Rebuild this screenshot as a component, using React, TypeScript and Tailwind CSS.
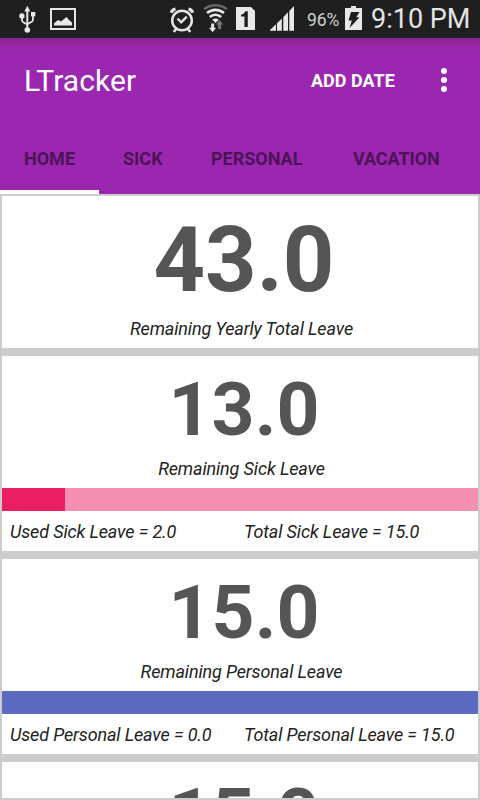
import type { ReactNode } from "react";

const text = "font-[Roboto,'Noto_Sans',sans-serif]";

function StatusBar() {
  return (
    <div className="flex h-[38px] w-full shrink-0 items-start bg-[#1f1f1f] text-[#e4e4e4]">
      <svg width="300" height="38" viewBox="0 0 300 38" className="shrink-0" fill="#e8e8e8">
        <g fill="none" stroke="#e8e8e8" strokeWidth="1.8">
          <path d="M27.3 10v20" strokeWidth="2" />
          <path d="M22 16v4.2c0 1 .5 1.500 1.300 2l4 2.300" />
          <path d="M33 15v4.800c0 1-.5 1.500-1.300 2l-4.400 2.400" />
        </g>
        <path d="M27.300 5.800l3 5.700h-6z" />
        <circle cx="21.900" cy="16" r="2.700" />
        <path d="M31 12h4.300v4.300H31z" />
        <circle cx="27.300" cy="30" r="2.800" />
        <rect x="51" y="9" width="24" height="20" fill="none" stroke="#e4e4e4" strokeWidth="2" />
        <path d="M54 25.500v-2l4-3.500 3 1.500 5.500-4.500 2.500 3 3 2.500v3z" />
        <g fill="none" stroke="#e4e4e4">
          <circle cx="182" cy="20.500" r="9.800" strokeWidth="2.500" />
          <path d="M177.500 18.500l3.700 3.800 5.600-5.600" strokeWidth="2.400" />
          <path d="M171.200 12.800c.6-2 2.200-3.400 4.300-3.800M192.800 12.800c-.6-2-2.200-3.400-4.300-3.800" strokeWidth="3" />
          <path d="M176 29l-2.200 3M188 29l2.200 3" strokeWidth="2.500" />
        </g>
        <g fill="none" strokeWidth="2.600">
          <path d="M204.300 9.200c6.500-5.200 15.900-5.200 22.400 0" stroke="#666" />
          <path d="M207 13.100c5.100-4.300 11.900-4.300 17 0M209.800 17c3.300-3 8.100-3 11.400 0" stroke="#e8e8e8" />
        </g>
        <path d="M212.300 19.800c1.900-1.600 4.500-1.600 6.400 0l-3.200 3.200z" />
        <path d="M211.200 23.500h2.900v4.200h2l-3.500 4.500-3.500-4.500h2.100z" />
        <path d="M218.100 29v-4.500h-2l3.500-4.500 3.500 4.500h-2V29z" fill="#777" />
        <path d="M236 7h15l4 4v19h-19z" />
        <path d="M241 14.800c2.200-.5 3.600-1.600 4.200-3.600h2.600V27h-3.400V16.500H241z" fill="#1f1f1f" />
        <path d="M270 30.700v-.7l6-5.800v6.500zM277 30.700v-7.500l4.800-4.700v12.200zM283.300 30.700V17l4.700-4.700v18.400zM289.300 30.700V11l4.700-5v24.700z" />
      </svg>
      <span className="mt-[10px] w-[45px] shrink-0 whitespace-nowrap pl-[7px] text-[17.500px] leading-[21px] tracking-[-0.1px] text-[#d0d0d0]">96%</span>
      <svg width="17" height="38" viewBox="0 0 17 38" className="shrink-0">
        <path d="M0 8h6V6h5v2h6v22H0z" fill="#e8e8e8" />
        <path d="M6 12h8.500l-3.200 5.300h3.200L4.500 28l2.300-7.500H3.500z" fill="#1f1f1f" />
      </svg>
      <span className="mt-[3px] shrink-0 whitespace-nowrap pl-[9px] text-[27px] leading-[32px]">9:10 PM</span>
    </div>
  );
}

function Toolbar() {
  return (
    <div className="flex h-[84px] items-center bg-linear-to-b from-[#8b238f] from-0% via-[#9a27ae] via-10% to-[#9b27b0] to-20% pl-6 text-white">
      <span className="w-[287px] pt-px text-[30px] leading-[36px] tracking-[0.1px]">LTracker</span>
      <span className="w-[124px] whitespace-nowrap text-[18px] font-bold leading-[21px]">ADD DATE</span>
      <div className="flex flex-col items-center gap-[3px] pl-[6px]">
        <i className="size-[6px] rounded-full bg-white" />
        <i className="size-[6px] rounded-full bg-white" />
        <i className="size-[6px] rounded-full bg-white" />
      </div>
    </div>
  );
}

function Tabs() {
  return (
    <div className="flex h-[72px] bg-[#9b27b0] text-[18px] font-bold leading-[21px] text-[#4c1357]">
      <div className="w-[99px] border-b-4 border-white pl-6 pt-[26px]">HOME</div>
      <div className="w-[88px] pl-6 pt-[26px]">SICK</div>
      <div className="w-[142px] pl-6 pt-[26px]">PERSONAL</div>
      <div className="pl-6 pt-[26px] tracking-[-0.1px]">VACATION</div>
    </div>
  );
}

function Caption({ children }: { children: ReactNode }) {
  return (
    <div className="pl-[3px] text-center text-[18px] italic leading-[21px] tracking-[-0.140px] text-[#222]">
      {children}
    </div>
  );
}

function DaysLeft({ children }: { children: ReactNode }) {
  return (
    <div className="mb-[5px] pl-[8px] text-center text-[75px] font-bold leading-[88px] text-[#555]">{children}</div>
  );
}

interface LeaveProps {
  left: string;
  name: string;
  used: string;
  total: string;
  children: ReactNode;
}

function LeaveCard({ left, name, used, total, children }: LeaveProps) {
  return (
    <section className="h-[195px] shrink-0 bg-white pt-[9px]">
      <DaysLeft>{left}</DaysLeft>
      <Caption>Remaining {name} Leave</Caption>
      <div className="mt-[9px] flex h-[23px]">{children}</div>
      <div className="grid grid-cols-[234px_1fr] pl-2 pt-[10px] text-[18px] italic leading-[21px] tracking-[-0.140px] text-[#222]">
        <span>{`Used ${name} Leave = ${used}`}</span>
        <span>{`Total ${name} Leave = ${total}`}</span>
      </div>
    </section>
  );
}

export default function App() {
  return (
    <div className={`${text} flex h-[800px] w-[480px] flex-col overflow-hidden`}>
      <StatusBar />
      <Toolbar />
      <Tabs />
      <main className="flex h-[606px] flex-col gap-2 overflow-hidden border-2 border-[#ccc] bg-[#ccc]">
        <section className="h-[152px] shrink-0 bg-white pt-[12px]">
          <div className="mb-[4px] pl-[8px] text-center text-[90px] font-bold leading-[106px] text-[#555]">43.0</div>
          <Caption>Remaining Yearly Total Leave</Caption>
        </section>
        <LeaveCard left="13.0" name="Sick" used="2.0" total="15.0">
          <div className="w-[63px] bg-[#e91e63]" />
          <div className="flex-1 bg-[#f48fb1]" />
        </LeaveCard>
        <LeaveCard left="15.0" name="Personal" used="0.0" total="15.0">
          <div className="flex-1 rounded-[1px] bg-[#5c6bc0]" />
        </LeaveCard>
        <section className="h-[36px] shrink-0 overflow-hidden bg-white pt-[9px]">
          <DaysLeft>15.0</DaysLeft>
        </section>
      </main>
    </div>
  );
}
